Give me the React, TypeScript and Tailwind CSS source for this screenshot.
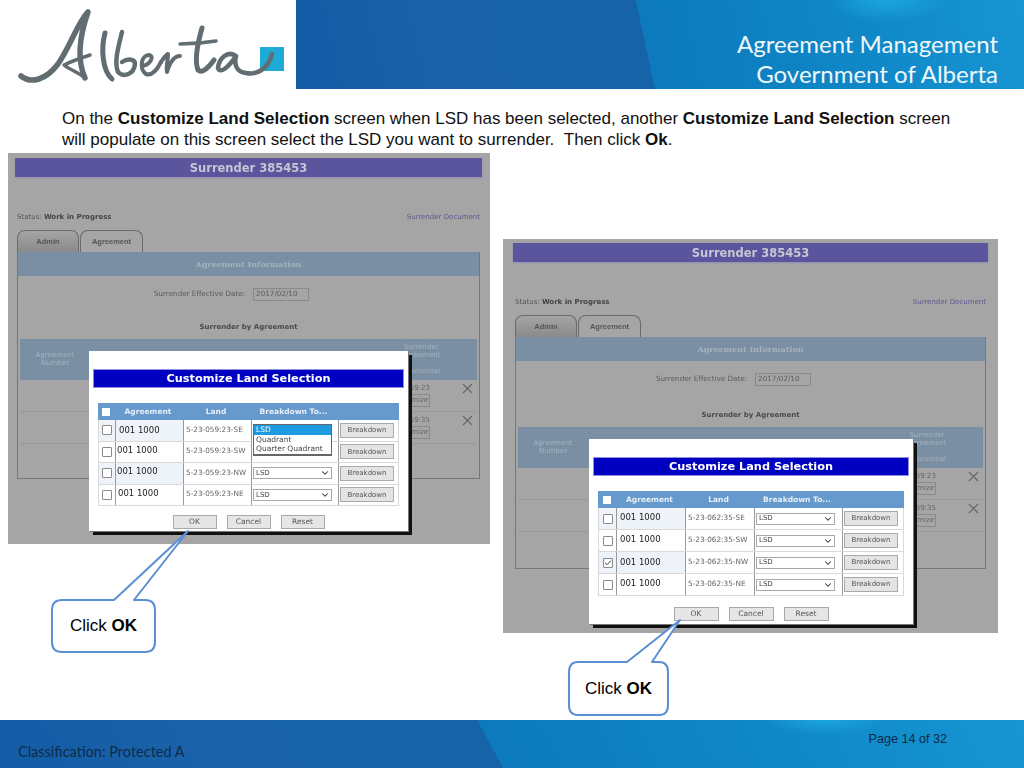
import { Check, ChevronDown, X } from "lucide-react";

const dejavu = "font-['DejaVu_Sans',sans-serif]";

function Logo() {
  return (
    <svg viewBox="0 0 296 89" className="h-[89px] w-[296px] shrink-0 bg-white">
      <rect x="260" y="47" width="24" height="24" fill="#1fa9d6" />
      <g fill="none" stroke="#626d72" strokeLinecap="round" strokeLinejoin="round">
        <path strokeWidth="5.5" d="M21 76C31 84 46 80 58 64C70 47 78 22 88 12C81 32 76 58 85 78" />
        <path strokeWidth="3.5" d="M85 78C78 72 70 70 64 65C70 62 78 59 90 55" />
        <path strokeWidth="5" d="M105 33C101 48 102 70 112 79" />
        <path strokeWidth="4.5" d="M122 32C118 48 114 62 118 72C124 78 134 74 135 64C135 59 128 58 122 62" />
        <path strokeWidth="4" d="M142 66C150 65 155 56 149 55C141 55 139 69 146 74C152 76 157 70 161 62" />
        <path strokeWidth="4" d="M161 62C164 58 166 54 168 54C168 60 166 66 167 72C170 62 174 56 180 56" />
        <path strokeWidth="5" d="M202 28C198 42 194 60 198 70C202 74 208 68 214 60" />
        <path strokeWidth="3.5" d="M180 44C190 44 204 43 216 41" />
        <path strokeWidth="4.5" d="M236 56C228 50 219 58 218 68C220 74 228 68 236 56C234 64 236 72 246 73C256 75 268 70 272 54" />
      </g>
    </svg>
  );
}

function Check4({ on }: { on?: boolean }) {
  return (
    <span className="flex h-[10px] w-[10px] items-center justify-center rounded-[1px] border border-[#8a8a8a] bg-white">
      {on && <Check size={8} strokeWidth={3} color="#333" />}
    </span>
  );
}

function Dropdown() {
  return (
    <span className="flex h-[12px] w-[79px] items-center justify-between border border-[#a8a8a8] bg-white pl-[2px] pr-[1px] text-[7px] text-[#444]">
      LSD
      <ChevronDown size={10} strokeWidth={2.5} color="#333" />
    </span>
  );
}

function OpenList() {
  return (
    <div className="absolute left-[1px] top-[4px] z-10 flex h-[32px] w-[79px] flex-col border border-b-2 border-[#666] bg-white text-[7.5px] leading-[9.5px] text-[#444]">
      <span className="bg-[#1e9be0] px-[2px] text-white">LSD</span>
      <span className="px-[2px]">Quadrant</span>
      <span className="whitespace-nowrap px-[2px]">Quarter Quadrant</span>
    </div>
  );
}

function ModalButton({ label, w }: { label: string; w: string }) {
  return (
    <span className={`${w} flex h-[14px] items-center justify-center border border-[#a9a9a9] bg-[#e6e6e6] text-[7.5px] text-[#555]`}>
      {label}
    </span>
  );
}

type Row = { land: string; agr: string; on?: boolean; open?: boolean; covered?: boolean };

function Modal({
  box,
  titleBox,
  tableBox,
  cols,
  rowH,
  btnW,
  rows,
  footer,
}: {
  box: string;
  titleBox: string;
  tableBox: string;
  cols: string;
  rowH: string;
  btnW: string;
  rows: Row[];
  footer: string;
}) {
  return (
    <div className={`${box} absolute z-10 flex flex-col bg-white shadow-[1px_1px_0_#777,4px_4px_0_#111] ${dejavu}`}>
      <div className={`${titleBox} flex h-[19px] items-center justify-center border border-[#8f8fe0] bg-[#0000c0] pt-[2px] text-[11.3px] font-bold text-white`}>
        Customize Land Selection
      </div>
      <div className={tableBox}>
        <div className={`grid ${cols} h-[17px] items-center bg-[#6699cc] text-[7.5px] font-bold text-[#e8f0f8]`}>
          <span className="flex justify-center">
            <span className="h-[8px] w-[8px] bg-white" />
          </span>
          <span className="text-center">Agreement</span>
          <span className="text-center">Land</span>
          <span className="text-center">Breakdown To...</span>
          <span />
        </div>
        {rows.map((r, i) => (
          <div key={r.land} className={`grid ${cols} ${rowH} border-x border-b border-[#d9d9d9]`}>
            <div className={`flex items-center justify-center ${i % 2 === 0 ? "bg-[#eef3f9]" : "bg-white"}`}>
              <Check4 on={r.on} />
            </div>
            <div className={`flex items-center border-l border-[#999] ${r.agr} text-[8.5px] text-[#222] ${i % 2 === 0 ? "bg-[#eef3f9]" : "bg-white"}`}>
              001 1000
            </div>
            <div className="flex items-center whitespace-nowrap border-l border-[#999] pl-[2px] text-[7.3px] text-[#666]">
              {r.land}
            </div>
            <div className="relative flex items-center border-l border-[#999] pl-[1px]">
              {!r.open && !r.covered && <Dropdown />}
              {r.open && <OpenList />}
            </div>
            <div className="flex items-center border-l border-[#999] pl-[1px]">
              <span className="flex h-[15px] w-[54px] items-center justify-center border border-[#aaa] bg-[#e4e4e4] text-[7px] text-[#555]">
                Breakdown
              </span>
            </div>
          </div>
        ))}
      </div>
      <div className={`${footer} flex justify-center gap-[10px]`}>
        <ModalButton label="OK" w={btnW} />
        <ModalButton label="Cancel" w={btnW} />
        <ModalButton label="Reset" w={btnW} />
      </div>
    </div>
  );
}

function Shot({
  wrap,
  pad,
  byGap,
  panelH,
  children,
}: {
  wrap: string;
  pad: string;
  byGap: string;
  panelH: string;
  children: React.ReactNode;
}) {
  return (
    <div className={`${wrap} relative shrink-0 overflow-hidden bg-[#a5a5a5] blur-[0.3px] ${dejavu}`}>
      <div className={`${pad} flex h-full flex-col`}>
        <div className="-mx-[2px] flex h-[19px] items-center justify-center bg-[#5a559c] pt-[2px] text-[11.5px] font-bold text-[#c6c6d4] shadow-[0_1px_2px_#8f8fb8]">
          Surrender 385453
        </div>
        <div className="mt-[34px] flex h-[12px] items-center justify-between text-[7px] text-[#555]">
          <span>
            Status: <b className="text-[#444]">Work in Progress</b>
          </span>
          <span className="text-[#5a5a90]">Surrender Document</span>
        </div>
        <div className="mt-[7px] flex h-[22px] items-end font-['Liberation_Sans',sans-serif] text-[7.5px] font-bold text-[#555]">
          <span className="flex h-[22px] w-[62px] items-center justify-center rounded-t-[8px] border border-b-0 border-[#6b6b6b] bg-gradient-to-b from-[#a5a5a5] to-[#8a8a8a]">
            Admin
          </span>
          <span className="ml-[1px] flex h-[22px] w-[63px] items-center justify-center rounded-t-[8px] border border-b-0 border-[#6b6b6b]">
            Agreement
          </span>
        </div>
        <div className={`${panelH} flex flex-col border-x border-b border-[#777]`}>
          <div className="flex h-[24px] items-center justify-center bg-[#7a8fa3] font-['DejaVu_Serif',serif] text-[8px] font-bold text-[#a5b2be]">
            Agreement Information
          </div>
          <div className="mt-[11px] flex h-[14px] items-center justify-center gap-[8px] pr-[34px] text-[7.2px] text-[#5c5c5c]">
            <span>Surrender Effective Date:</span>
            <span className="flex h-[13px] w-[56px] items-center border border-[#8a8a8a] pl-[2px]">2017/02/10</span>
          </div>
          <div className={`${byGap} text-center text-[7px] font-bold text-[#4a4a4a]`}>Surrender by Agreement</div>
          <div className="mx-[2px] mt-[6px]">
            <div className="grid h-[41px] grid-cols-[70px_1fr_74px_19px] bg-[#7a8fa3] text-[7px] leading-[8px] text-[#a5b2be]">
              <span className="flex items-center justify-center text-center">
                Agreement
                <br />
                Number
              </span>
              <span />
              <span className="pt-[4px] text-center">
                Surrender
                <br />
                Agreement
                <br />
                <br />
                Provisional
              </span>
              <span />
            </div>
            {["5-23-059:23", "5-23-059:35"].map((t) => (
              <div key={t} className="grid h-[32px] grid-cols-[70px_1fr_74px_19px] border-b border-[#999]">
                <span />
                <span />
                <span className="flex flex-col items-end pr-[28px] pt-[3px] text-[7px] text-[#666]">
                  {t}
                  <span className="mt-[1px] border border-[#8a8a8a] px-[1px]">Customize</span>
                </span>
                <span className="flex items-start justify-center">
                  <X size={17} strokeWidth={1.5} color="#666" />
                </span>
              </div>
            ))}
          </div>
        </div>
      </div>
      {children}
    </div>
  );
}

function Callout({ box, tail }: { box: string; tail: string }) {
  return (
    <div className={`${box} absolute z-20 flex items-center justify-center font-['Liberation_Sans',sans-serif] text-[17px] text-black`}>
      <svg className="absolute left-[-60px] top-[-90px] h-[150px] w-[240px] overflow-visible" viewBox="-60 0 240 150">
        <path d={tail} fill="white" stroke="#5b8fd3" strokeWidth="2" strokeLinejoin="round" />
      </svg>
      <span className="relative">
        Click <b>OK</b>
      </span>
    </div>
  );
}

const rowsA: Row[] = [
  { land: "5-23-059:23-SE", agr: "pl-[3px]", open: true },
  { land: "5-23-059:23-SW", agr: "pl-[1px] pb-[3px]", covered: true },
  { land: "5-23-059:23-NW", agr: "pl-[1px] pb-[3px]" },
  { land: "5-23-059:23-NE", agr: "pl-[2px] pb-[2px]" },
];
const rowsB: Row[] = [
  { land: "5-23-062:35-SE", agr: "pl-[3px] pb-[3px]" },
  { land: "5-23-062:35-SW", agr: "pl-[3px] pb-[3px]" },
  { land: "5-23-062:35-NW", agr: "pl-[3px]", on: true },
  { land: "5-23-062:35-NE", agr: "pl-[3px] pb-[3px]" },
];

export default function App() {
  return (
    <div className="relative flex h-[768px] w-[1024px] flex-col overflow-hidden bg-white">
      <header className="flex h-[89px] shrink-0">
        <Logo />
        <div className="flex flex-1 flex-col items-end justify-end bg-[radial-gradient(ellipse_60px_22px_at_590px_0px,#1ba6de,transparent),linear-gradient(78deg,#135ca6_0px,#1a63aa_150px,#1763aa_351px,#0c7abc_351px,#0f86c6_540px,#1795d2_730px)] pr-[26px] text-right font-['Lato',sans-serif] text-[24px] leading-[30px] text-[#eef7fc]">
          <div>Agreement Management</div>
          <div>Government of Alberta</div>
        </div>
      </header>

      <main className="flex min-h-0 flex-1 flex-col">
        <p className="pl-[62px] pt-[19px] font-['Liberation_Sans',sans-serif] text-[17px] leading-[21px] text-[#111]">
          On the <b>Customize Land Selection</b> screen when LSD has been selected, another <b>Customize Land Selection</b> screen
          <br />
          will populate on this screen select the LSD you want to surrender. &nbsp;Then click <b>Ok</b>.
        </p>
        <div className="mt-[3px] flex items-start pl-[8px]">
          <Shot wrap="h-[391px] w-[482px]" pad="pl-[9px] pr-[10px] pt-[5px]" byGap="mt-[21px]" panelH="h-[227px]">
            <Modal
              box="left-[81px] top-[198px] h-[180px] w-[319px]"
              titleBox="mx-[4px] mt-[18px]"
              tableBox="mx-[9px] mt-[15px]"
              cols="grid-cols-[16px_68px_68px_87px_1fr]"
              rowH="h-[21.5px]"
              btnW="w-[44px]"
              rows={rowsA}
              footer="mt-[9px]"
            />
          </Shot>
          <div className="ml-[13px] mt-[86px]">
            <Shot wrap="h-[394px] w-[495px]" pad="px-[12px] pt-[4px]" byGap="mt-[24px]" panelH="h-[232px]">
              <Modal
                box="left-[86px] top-[200px] h-[185px] w-[324px]"
                titleBox="mx-[4px] mt-[18px]"
                tableBox="mx-[9px] mt-[15px]"
                cols="grid-cols-[17px_69px_69px_88px_1fr]"
                rowH="h-[22px]"
                btnW="w-[45px]"
                rows={rowsB}
                footer="mt-[11px]"
              />
            </Shot>
          </div>
        </div>
      </main>

      <Callout
        box="left-[52px] top-[600px] h-[52px] w-[103px]"
        tail="M62 90 L136 21 L82 90 L93 90 Q103 90 103 100 L103 132 Q103 142 93 142 L10 142 Q0 142 0 132 L0 100 Q0 90 10 90 Z"
      />
      <Callout
        box="left-[569px] top-[662px] h-[53px] w-[99px]"
        tail="M58 90 L111 48 L83 90 L90 90 Q99 90 99 100 L99 133 Q99 143 90 143 L9 143 Q0 143 0 133 L0 100 Q0 90 9 90 Z"
      />

      <footer className="flex h-[48px] shrink-0 items-start justify-between bg-[radial-gradient(ellipse_60px_14px_at_825px_0px,#1ba6de,transparent),linear-gradient(62deg,#135ca6_0px,#1a63aa_200px,#1763aa_444px,#0c7abc_444px,#0f86c6_660px,#1795d2_927px)] pl-[18px] pr-[77px]">
        <span className="pt-[23px] font-['Lato',sans-serif] text-[14.5px] leading-[18px] text-[#0d2c4a]">Classification: Protected A</span>
        <span className="pt-[12px] font-['Liberation_Sans',sans-serif] text-[12.6px] leading-[14px] text-[#0b2a4a]">Page 14 of 32</span>
      </footer>
    </div>
  );
}
